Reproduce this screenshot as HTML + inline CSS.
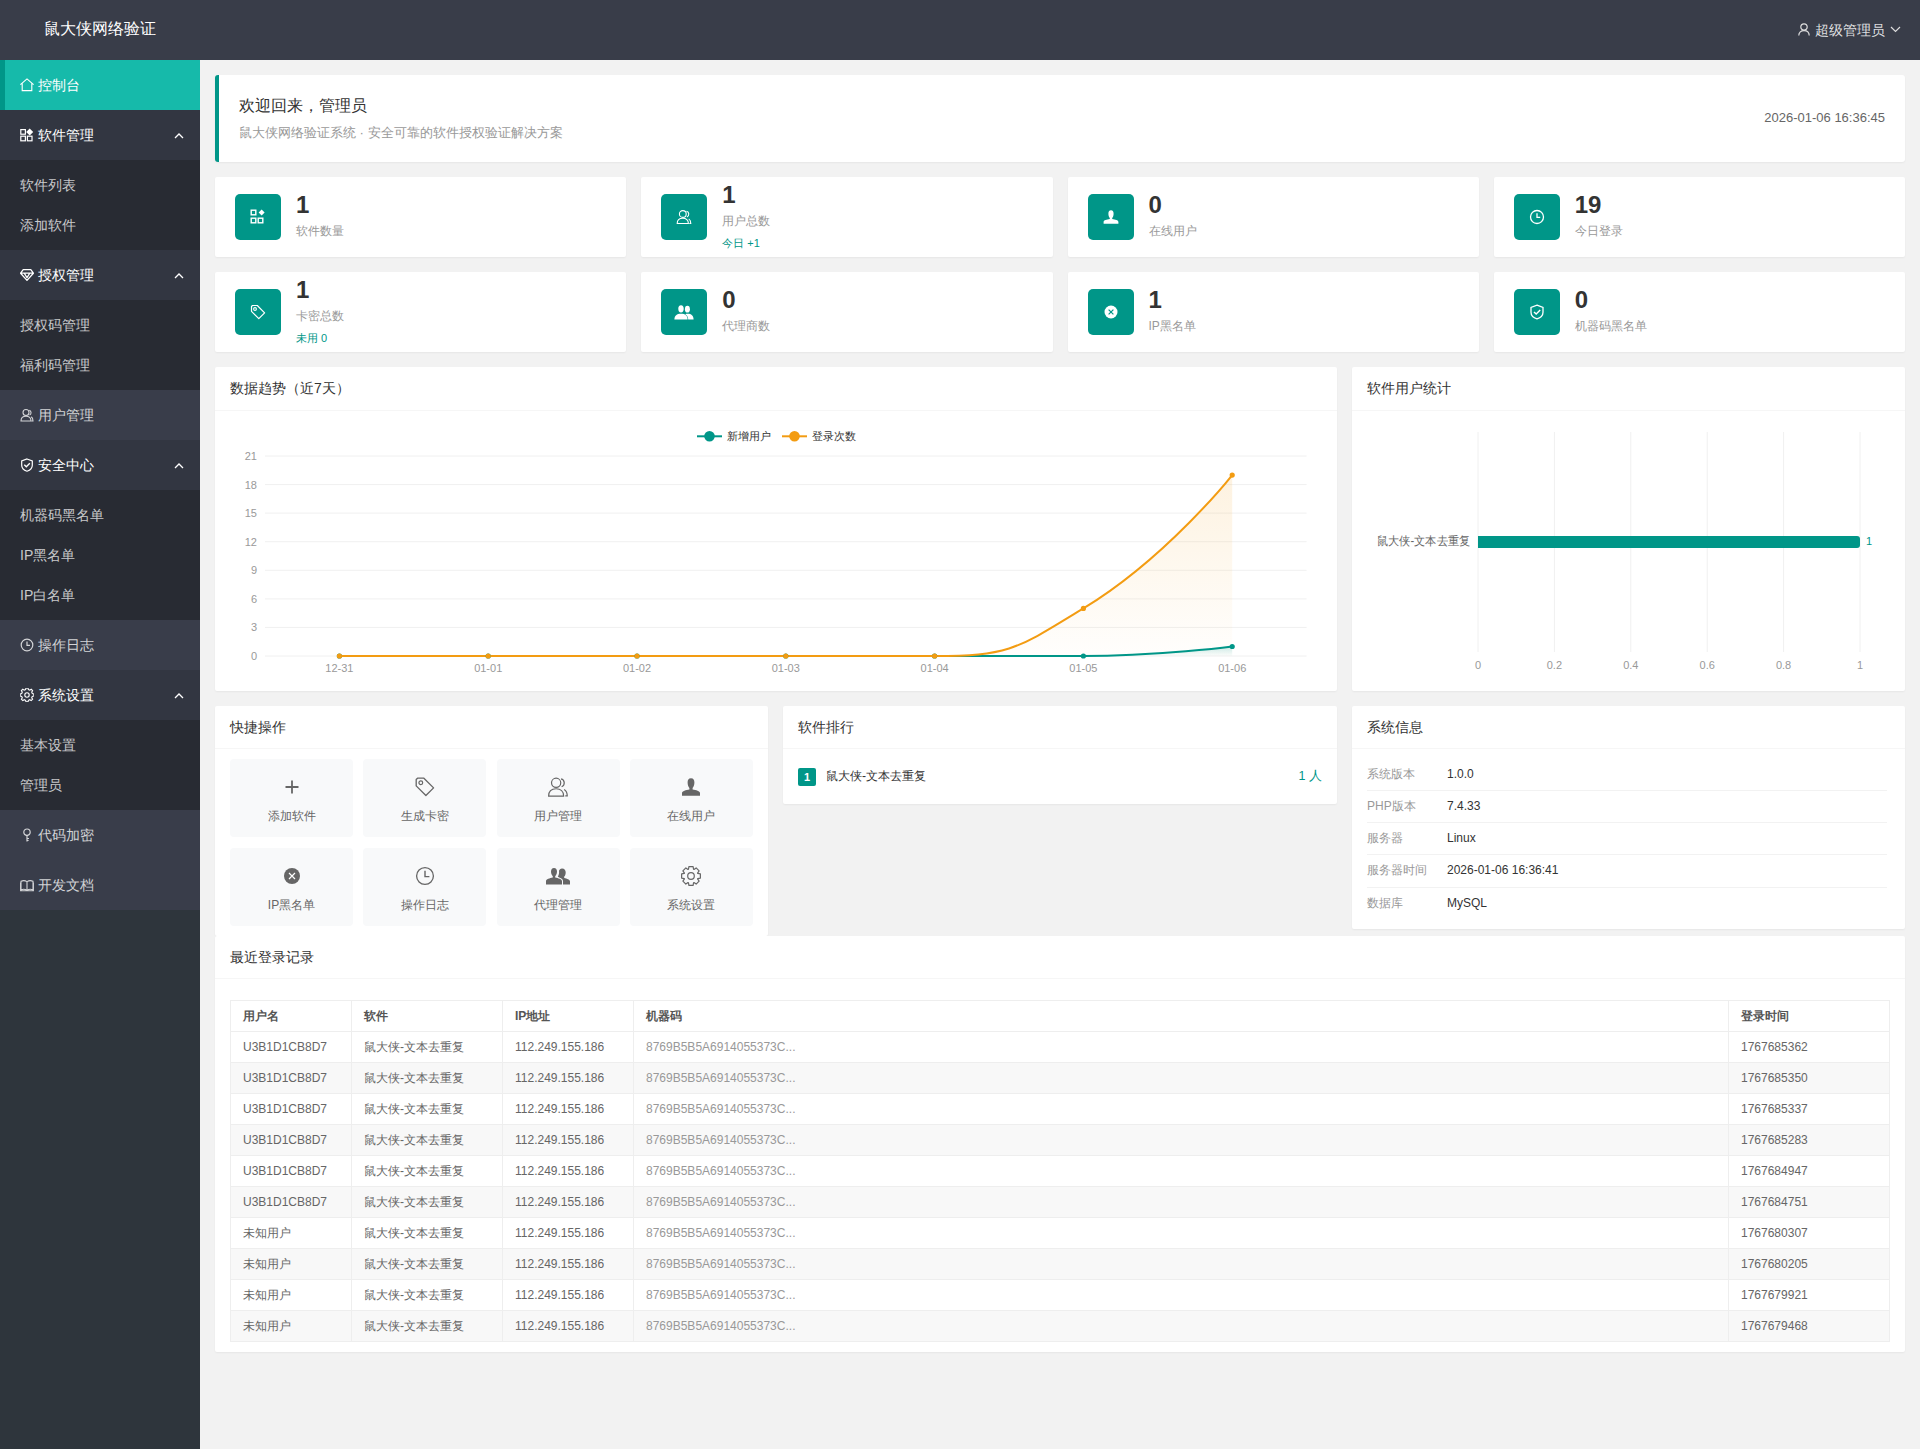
<!DOCTYPE html>
<html><head><meta charset="utf-8">
<style>
*{margin:0;padding:0;box-sizing:border-box}
html,body{width:1920px;height:1449px;overflow:hidden}
body{font-family:"Liberation Sans",sans-serif;background:#f2f2f2;color:#333;position:relative;font-size:14px}
.abs{position:absolute}
#hdr{left:0;top:0;width:1920px;height:60px;background:#393d49}
#logo{left:44px;top:18px;font-size:16px;color:#fff;line-height:22px;font-weight:500}
#uname{right:19px;top:19px;font-size:14px;color:rgba(255,255,255,.85);line-height:22px;display:flex;align-items:center}
#side{left:0;top:60px;width:200px;height:1389px;background:#2e353c}
.it{position:absolute;left:0;width:200px;height:50px;line-height:50px;padding-left:20px;color:rgba(255,255,255,.78);font-size:14px;background:#393d4a;display:flex;align-items:center}
.it.op{background:#323641;color:#fff;font-weight:500}
.it.act{background:#16baaa;color:#fff;border-left:5px solid #009688;padding-left:15px;font-weight:500}
.it svg{width:14px;height:14px;margin-right:4px;flex:none}
.it .car{position:absolute;left:174px;top:22px;width:10px;height:7px}
.ch{position:absolute;left:0;width:200px;background:#282b33}
.ch div{height:40px;line-height:40px;padding-left:20px;color:rgba(255,255,255,.75);font-size:14px}
.card{position:absolute;background:#fff;border-radius:2px;box-shadow:0 1px 2px 0 rgba(0,0,0,.05)}
.ch1{height:43px;line-height:42px;padding:0 15px;border-bottom:1px solid #f6f6f6;font-size:14px;color:#333}
.ib{width:46px;height:46px;background:#009688;border-radius:5px;display:flex;align-items:center;justify-content:center}
.num{font-size:24px;font-weight:bold;line-height:28px;color:#333}
.lab{font-size:12px;line-height:17px;color:#999}
.ext{font-size:11px;line-height:17px;color:#009688}
</style><style>
.tile{position:absolute;width:123px;height:78px;background:#f8f9fa;border-radius:4px}
.ti{position:absolute;left:0;top:17px;width:123px;height:22px;display:flex;align-items:center;justify-content:center}
.tl{position:absolute;left:0;top:49px;width:123px;text-align:center;font-size:12px;line-height:16px;color:#666}
.badge{width:18px;height:18px;background:#009688;border-radius:2px;color:#fff;font-size:11px;font-weight:bold;line-height:18px;text-align:center}
.srow{left:1367px;width:520px;height:32.25px;font-size:12px;line-height:31px}
.sk{position:absolute;left:0;color:#999}
.sv{position:absolute;left:80px;color:#333}
.tb{border-collapse:collapse;table-layout:fixed;width:1659px;font-size:12px;color:#666}
.tb td{height:31px;padding:0 12px;border:1px solid #eee;line-height:30px;white-space:nowrap;overflow:hidden}
.tb .th td{font-weight:bold;color:#555}
.tb tr.ev td{background:#f8f8f8}
.tb td.mc{color:#999}
</style></head><body>
<div id="hdr" class="abs"></div>
<div id="logo" class="abs">鼠大侠网络验证</div>
<div class="abs" style="left:1798px;top:23px;width:12px;height:13px"><svg width="12" height="13" viewBox="0 0 12 13"><circle cx="6" cy="4" r="3.2" fill="none" stroke="#ddd" stroke-width="1.2"/><path d="M0.8 12.6C0.8 9.2 3 7.6 6 7.6S11.2 9.2 11.2 12.6" fill="none" stroke="#ddd" stroke-width="1.2"/></svg></div>
<div class="abs" style="left:1815px;top:19px;font-size:14px;line-height:22px;color:rgba(255,255,255,.85)">超级管理员</div>
<div class="abs" style="left:1890px;top:20px;width:11px;height:7px"><svg width="11" height="7" viewBox="0 0 11 7"><path d="M1 1L5.5 5.5L10 1" fill="none" stroke="#ddd" stroke-width="1.2"/></svg></div>
<div id="side" class="abs"></div>
<div class="it act" style="top:60px"><svg viewBox="0 0 14 14"><path d="M0.4 6.6L7 0.9L13.6 6.6M2.2 5.1V12.6H11.8V5.1" fill="none" stroke="currentColor" stroke-width="1.1"/></svg><span>控制台</span></div>
<div class="it op" style="top:110px"><svg viewBox="0 0 14 14"><g fill="none" stroke="currentColor" stroke-width="1.2"><rect x="0.8" y="1.6" width="4.6" height="4.6"/><rect x="0.8" y="8.2" width="4.6" height="4.6"/><rect x="7.4" y="8.2" width="4.6" height="4.6"/></g><path d="M9.7 0.4L13.2 3.9L9.7 7.4L6.2 3.9Z" fill="currentColor"/></svg><span>软件管理</span><svg class="car" viewBox="0 0 10 7"><path d="M1 6L5 2L9 6" fill="none" stroke="#fff" stroke-width="1.3"/></svg></div>
<div class="it op" style="top:250px"><svg viewBox="0 0 14 14"><path d="M3.2 1.6H10.8L13.4 5.2L7 12.4L0.6 5.2Z M1 5.2H13 M4.2 5.2L7 9.6L9.8 5.2" fill="none" stroke="currentColor" stroke-width="1.3" stroke-linejoin="round"/></svg><span>授权管理</span><svg class="car" viewBox="0 0 10 7"><path d="M1 6L5 2L9 6" fill="none" stroke="#fff" stroke-width="1.3"/></svg></div>
<div class="it " style="top:390px"><svg viewBox="0 0 14 14"><g fill="none" stroke="currentColor" stroke-width="1.1"><circle cx="6" cy="4.5" r="3"/><path d="M1 13C1 9.8 3 8.3 6 8.3S11 9.8 11 13Z"/><path d="M9.3 2.2A2.6 2.6 0 0 1 9.6 7M11.2 8.8C12.3 9.5 13 10.8 13 13H11.5"/></g></svg><span>用户管理</span></div>
<div class="it op" style="top:440px"><svg viewBox="0 0 14 14"><path d="M7 1L12.3 3V7.2C12.3 10 10 12.2 7 13.2C4 12.2 1.7 10 1.7 7.2V3Z" fill="none" stroke="currentColor" stroke-width="1.2"/><path d="M4.3 6.8L6.3 8.8L9.8 5.2" fill="none" stroke="currentColor" stroke-width="1.3"/></svg><span>安全中心</span><svg class="car" viewBox="0 0 10 7"><path d="M1 6L5 2L9 6" fill="none" stroke="#fff" stroke-width="1.3"/></svg></div>
<div class="it " style="top:620px"><svg viewBox="0 0 14 14"><circle cx="7" cy="7" r="5.8" fill="none" stroke="currentColor" stroke-width="1.2"/><path d="M7 3.5V7.3H10" fill="none" stroke="currentColor" stroke-width="1.2"/></svg><span>操作日志</span></div>
<div class="it op" style="top:670px"><svg viewBox="0 0 14 14"><path d="M6 1H8L8.4 2.6L9.8 3.2L11.2 2.3L12.6 3.7L11.7 5.1L12.3 6.5L13.9 7V9L12.3 9.4L11.7 10.8L12.6 12.2L11.2 13.6L9.8 12.7L8.4 13.3L8 14.9H6L5.6 13.3L4.2 12.7L2.8 13.6L1.4 12.2L2.3 10.8L1.7 9.4L0.1 9V7L1.7 6.5L2.3 5.1L1.4 3.7L2.8 2.3L4.2 3.2L5.6 2.6Z" transform="translate(0,-1) scale(1,1)" fill="none" stroke="currentColor" stroke-width="1.1"/><circle cx="7" cy="7" r="2.2" fill="none" stroke="currentColor" stroke-width="1.1"/></svg><span>系统设置</span><svg class="car" viewBox="0 0 10 7"><path d="M1 6L5 2L9 6" fill="none" stroke="#fff" stroke-width="1.3"/></svg></div>
<div class="it " style="top:810px"><svg viewBox="0 0 14 14"><circle cx="7" cy="4.2" r="3.2" fill="none" stroke="currentColor" stroke-width="1.2"/><path d="M7 7.4V13.5M7 10.5H9M7 12.5H8.6" fill="none" stroke="currentColor" stroke-width="1.2"/></svg><span>代码加密</span></div>
<div class="it " style="top:860px"><svg viewBox="0 0 14 14"><path d="M1 3.2C3 2.4 5 2.4 7 3.6C9 2.4 11 2.4 13 3.2V11.8C11 11 9 11 7 12.2C5 11 3 11 1 11.8Z M7 3.6V12.2 M0.6 4.5V12.8H13.4V4.5" fill="none" stroke="currentColor" stroke-width="1.1"/></svg><span>开发文档</span></div>
<div class="ch" style="top:160px;height:90px;padding-top:5px"><div>软件列表</div><div>添加软件</div></div>
<div class="ch" style="top:300px;height:90px;padding-top:5px"><div>授权码管理</div><div>福利码管理</div></div>
<div class="ch" style="top:490px;height:130px;padding-top:5px"><div>机器码黑名单</div><div>IP黑名单</div><div>IP白名单</div></div>
<div class="ch" style="top:720px;height:90px;padding-top:5px"><div>基本设置</div><div>管理员</div></div>

<div class="card" style="left:215px;top:75px;width:1690px;height:87px;border-left:4px solid #009688;border-radius:3px"></div>
<div class="abs" style="left:239px;top:95px;font-size:16px;line-height:22px;color:#333">欢迎回来，管理员</div>
<div class="abs" style="left:239px;top:124px;font-size:13px;line-height:18px;color:#999">鼠大侠网络验证系统 · 安全可靠的软件授权验证解决方案</div>
<div class="abs" style="right:35px;top:109px;font-size:13px;line-height:18px;color:#666">2026-01-06 16:36:45</div>

<div class="card" style="left:215px;top:177px;width:411.25px;height:80px"></div>
<div class="abs ib" style="left:235px;top:194px"><svg viewBox="0 0 16 16" width="16" height="16"><g fill="none" stroke="#fff" stroke-width="1.4"><rect x="1.2" y="1.2" width="4.6" height="4.6"/><rect x="1.2" y="9.2" width="4.6" height="4.6"/><rect x="8.2" y="9.2" width="4.6" height="4.6"/></g><path d="M11.6 0.6L14.6 3.6L11.6 6.6L8.6 3.6Z" fill="#fff"/></svg></div>
<div class="abs num" style="left:296px;top:191px">1</div>
<div class="abs lab" style="left:296px;top:223px">软件数量</div>
<div class="card" style="left:641.25px;top:177px;width:411.25px;height:80px"></div>
<div class="abs ib" style="left:661.25px;top:194px"><svg viewBox="0 0 16 16" width="16" height="16"><g fill="none" stroke="#fff" stroke-width="1.1"><circle cx="6.8" cy="5" r="3.4"/><path d="M1.2 14.5C1.2 11 3.5 9.3 6.8 9.3S12.4 11 12.4 14.5Z"/><path d="M10.5 2.2A3 3 0 0 1 10.9 7.9M12.7 9.9C14 10.7 14.8 12.2 14.8 14.5H13.3"/></g></svg></div>
<div class="abs num" style="left:722.25px;top:181px">1</div>
<div class="abs lab" style="left:722.25px;top:213px">用户总数</div>
<div class="abs ext" style="left:722.25px;top:235px">今日 +1</div>
<div class="card" style="left:1067.5px;top:177px;width:411.25px;height:80px"></div>
<div class="abs ib" style="left:1087.5px;top:194px"><svg viewBox="0 0 16 16" width="16" height="16"><path d="M8 1.3C6.1 1.3 5.4 2.8 5.4 4.7C5.4 6.5 6 8.1 6.8 8.9V10.1C3.8 10.6 0.6 11.3 0.6 12.9V14.7H15.4V12.9C15.4 11.3 12.2 10.6 9.2 10.1V8.9C10 8.1 10.6 6.5 10.6 4.7C10.6 2.8 9.9 1.3 8 1.3Z" fill="#fff"/></svg></div>
<div class="abs num" style="left:1148.5px;top:191px">0</div>
<div class="abs lab" style="left:1148.5px;top:223px">在线用户</div>
<div class="card" style="left:1493.75px;top:177px;width:411.25px;height:80px"></div>
<div class="abs ib" style="left:1513.75px;top:194px"><svg viewBox="0 0 16 16" width="16" height="16"><circle cx="8" cy="8" r="6.5" fill="none" stroke="#fff" stroke-width="1.3"/><path d="M8 4.2V8.4H11.2" fill="none" stroke="#fff" stroke-width="1.3"/></svg></div>
<div class="abs num" style="left:1574.75px;top:191px">19</div>
<div class="abs lab" style="left:1574.75px;top:223px">今日登录</div>
<div class="card" style="left:215px;top:272px;width:411.25px;height:80px"></div>
<div class="abs ib" style="left:235px;top:289px"><svg viewBox="0 0 16 16" width="16" height="16"><path d="M1.5 2.5V7.3L8.8 14.6L14.6 8.8L7.3 1.5H2.5Z" fill="none" stroke="#fff" stroke-width="1.2" stroke-linejoin="round"/><circle cx="5" cy="5" r="1.4" fill="none" stroke="#fff" stroke-width="1.1"/></svg></div>
<div class="abs num" style="left:296px;top:276px">1</div>
<div class="abs lab" style="left:296px;top:308px">卡密总数</div>
<div class="abs ext" style="left:296px;top:330px">未用 0</div>
<div class="card" style="left:641.25px;top:272px;width:411.25px;height:80px"></div>
<div class="abs ib" style="left:661.25px;top:289px"><svg viewBox="0 0 20 15" width="20" height="15"><ellipse cx="13.4" cy="4.2" rx="2.5" ry="3.4" fill="#fff"/><path d="M11.2 9.3C12 8.9 12.8 8.8 13.6 8.8C17.3 8.8 19.6 10.6 19.6 14.6H14.2C14.2 12.2 13.1 10.4 11.2 9.3Z" fill="#fff"/><ellipse cx="7" cy="3.8" rx="2.7" ry="3.6" fill="#fff"/><path d="M0.4 14.6C0.4 10.7 2.8 8.7 7 8.7S13.6 10.7 13.6 14.6Z" fill="#fff"/></svg></div>
<div class="abs num" style="left:722.25px;top:286px">0</div>
<div class="abs lab" style="left:722.25px;top:318px">代理商数</div>
<div class="card" style="left:1067.5px;top:272px;width:411.25px;height:80px"></div>
<div class="abs ib" style="left:1087.5px;top:289px"><svg viewBox="0 0 16 16" width="16" height="16"><circle cx="8" cy="8" r="6.5" fill="#fff"/><path d="M5.6 5.6L10.4 10.4M10.4 5.6L5.6 10.4" stroke="#009688" stroke-width="1.2"/></svg></div>
<div class="abs num" style="left:1148.5px;top:286px">1</div>
<div class="abs lab" style="left:1148.5px;top:318px">IP黑名单</div>
<div class="card" style="left:1493.75px;top:272px;width:411.25px;height:80px"></div>
<div class="abs ib" style="left:1513.75px;top:289px"><svg viewBox="0 0 16 16" width="16" height="16"><path d="M8 1.2L14 3.4V8.2C14 11.3 11.4 13.8 8 14.9C4.6 13.8 2 11.3 2 8.2V3.4Z" fill="none" stroke="#fff" stroke-width="1.3"/><path d="M5 7.9L7.2 10.1L11.2 6" fill="none" stroke="#fff" stroke-width="1.4"/></svg></div>
<div class="abs num" style="left:1574.75px;top:286px">0</div>
<div class="abs lab" style="left:1574.75px;top:318px">机器码黑名单</div>

<div class="card" style="left:215px;top:367px;width:1121.67px;height:324px"><div class="ch1" style="height:44px;line-height:43px">数据趋势（近7天）</div></div>
<div class="card" style="left:1351.67px;top:367px;width:553.33px;height:324px"><div class="ch1" style="height:44px;line-height:43px">软件用户统计</div></div>
<svg class="abs" style="left:0;top:0" width="1920" height="1449" viewBox="0 0 1920 1449" font-family="Liberation Sans, sans-serif">
<defs><linearGradient id="go" x1="0" y1="0" x2="0" y2="1"><stop offset="0" stop-color="#f39c12" stop-opacity="0.13"/><stop offset="1" stop-color="#f39c12" stop-opacity="0.01"/></linearGradient><linearGradient id="gt" x1="0" y1="0" x2="0" y2="1"><stop offset="0" stop-color="#009688" stop-opacity="0.2"/><stop offset="1" stop-color="#009688" stop-opacity="0.01"/></linearGradient></defs>
<line x1="265" y1="656.0" x2="1306.6" y2="656.0" stroke="#f0f0f0" stroke-width="1"/>
<text x="257" y="660.0" text-anchor="end" font-size="11" fill="#999">0</text>
<line x1="265" y1="627.4" x2="1306.6" y2="627.4" stroke="#f0f0f0" stroke-width="1"/>
<text x="257" y="631.4" text-anchor="end" font-size="11" fill="#999">3</text>
<line x1="265" y1="598.9" x2="1306.6" y2="598.9" stroke="#f0f0f0" stroke-width="1"/>
<text x="257" y="602.9" text-anchor="end" font-size="11" fill="#999">6</text>
<line x1="265" y1="570.3" x2="1306.6" y2="570.3" stroke="#f0f0f0" stroke-width="1"/>
<text x="257" y="574.3" text-anchor="end" font-size="11" fill="#999">9</text>
<line x1="265" y1="541.7" x2="1306.6" y2="541.7" stroke="#f0f0f0" stroke-width="1"/>
<text x="257" y="545.7" text-anchor="end" font-size="11" fill="#999">12</text>
<line x1="265" y1="513.1" x2="1306.6" y2="513.1" stroke="#f0f0f0" stroke-width="1"/>
<text x="257" y="517.1" text-anchor="end" font-size="11" fill="#999">15</text>
<line x1="265" y1="484.6" x2="1306.6" y2="484.6" stroke="#f0f0f0" stroke-width="1"/>
<text x="257" y="488.6" text-anchor="end" font-size="11" fill="#999">18</text>
<line x1="265" y1="456.0" x2="1306.6" y2="456.0" stroke="#f0f0f0" stroke-width="1"/>
<text x="257" y="460.0" text-anchor="end" font-size="11" fill="#999">21</text>
<text x="339.4" y="672" text-anchor="middle" font-size="11" fill="#999">12-31</text>
<text x="488.2" y="672" text-anchor="middle" font-size="11" fill="#999">01-01</text>
<text x="637.0" y="672" text-anchor="middle" font-size="11" fill="#999">01-02</text>
<text x="785.8" y="672" text-anchor="middle" font-size="11" fill="#999">01-03</text>
<text x="934.6" y="672" text-anchor="middle" font-size="11" fill="#999">01-04</text>
<text x="1083.4" y="672" text-anchor="middle" font-size="11" fill="#999">01-05</text>
<text x="1232.2" y="672" text-anchor="middle" font-size="11" fill="#999">01-06</text>
<path d="M339.40 656.00 C339.40 656.00 413.80 656.00 488.20 656.00 C562.60 656.00 562.60 656.00 637.00 656.00 C711.40 656.00 711.40 656.00 785.80 656.00 C860.20 656.00 862.01 656.00 934.60 656.00 C1010.81 656.00 1018.10 648.08 1083.40 608.38 C1166.90 557.61 1232.20 475.05 1232.20 475.05 L1232.20 656 L339.40 656Z" fill="url(#go)"/>
<path d="M339.40 656.00 C339.40 656.00 413.80 656.00 488.20 656.00 C562.60 656.00 562.60 656.00 637.00 656.00 C711.40 656.00 711.40 656.00 785.80 656.00 C860.20 656.00 860.20 656.00 934.60 656.00 C1009.00 656.00 1009.08 656.00 1083.40 656.00 C1157.88 656.00 1232.20 646.48 1232.20 646.48 L1232.20 656 L339.40 656Z" fill="url(#gt)"/>
<path d="M339.40 656.00 C339.40 656.00 413.80 656.00 488.20 656.00 C562.60 656.00 562.60 656.00 637.00 656.00 C711.40 656.00 711.40 656.00 785.80 656.00 C860.20 656.00 860.20 656.00 934.60 656.00 C1009.00 656.00 1009.08 656.00 1083.40 656.00 C1157.88 656.00 1232.20 646.48 1232.20 646.48" fill="none" stroke="#009688" stroke-width="2"/>
<path d="M339.40 656.00 C339.40 656.00 413.80 656.00 488.20 656.00 C562.60 656.00 562.60 656.00 637.00 656.00 C711.40 656.00 711.40 656.00 785.80 656.00 C860.20 656.00 862.01 656.00 934.60 656.00 C1010.81 656.00 1018.10 648.08 1083.40 608.38 C1166.90 557.61 1232.20 475.05 1232.20 475.05" fill="none" stroke="#f39c12" stroke-width="2"/>
<circle cx="339.40" cy="656.00" r="2.6" fill="#009688"/>
<circle cx="488.20" cy="656.00" r="2.6" fill="#009688"/>
<circle cx="637.00" cy="656.00" r="2.6" fill="#009688"/>
<circle cx="785.80" cy="656.00" r="2.6" fill="#009688"/>
<circle cx="934.60" cy="656.00" r="2.6" fill="#009688"/>
<circle cx="1083.40" cy="656.00" r="2.6" fill="#009688"/>
<circle cx="1232.20" cy="646.48" r="2.6" fill="#009688"/>
<circle cx="339.40" cy="656.00" r="2.6" fill="#f39c12"/>
<circle cx="488.20" cy="656.00" r="2.6" fill="#f39c12"/>
<circle cx="637.00" cy="656.00" r="2.6" fill="#f39c12"/>
<circle cx="785.80" cy="656.00" r="2.6" fill="#f39c12"/>
<circle cx="934.60" cy="656.00" r="2.6" fill="#f39c12"/>
<circle cx="1083.40" cy="608.38" r="2.6" fill="#f39c12"/>
<circle cx="1232.20" cy="475.05" r="2.6" fill="#f39c12"/>
<line x1="697" y1="436.3" x2="722" y2="436.3" stroke="#009688" stroke-width="2"/><circle cx="709.5" cy="436.3" r="5.3" fill="#009688"/>
<text x="727" y="440.3" font-size="11" fill="#333" textLength="44" lengthAdjust="spacingAndGlyphs">新增用户</text>
<line x1="782" y1="436.3" x2="807" y2="436.3" stroke="#f39c12" stroke-width="2"/><circle cx="794.5" cy="436.3" r="5.3" fill="#f39c12"/>
<text x="812" y="440.3" font-size="11" fill="#333" textLength="44" lengthAdjust="spacingAndGlyphs">登录次数</text>
<line x1="1478.0" y1="432" x2="1478.0" y2="652" stroke="#f0f0f0" stroke-width="1"/>
<text x="1478.0" y="669" text-anchor="middle" font-size="11" fill="#999">0</text>
<line x1="1554.4" y1="432" x2="1554.4" y2="652" stroke="#f0f0f0" stroke-width="1"/>
<text x="1554.4" y="669" text-anchor="middle" font-size="11" fill="#999">0.2</text>
<line x1="1630.8" y1="432" x2="1630.8" y2="652" stroke="#f0f0f0" stroke-width="1"/>
<text x="1630.8" y="669" text-anchor="middle" font-size="11" fill="#999">0.4</text>
<line x1="1707.2" y1="432" x2="1707.2" y2="652" stroke="#f0f0f0" stroke-width="1"/>
<text x="1707.2" y="669" text-anchor="middle" font-size="11" fill="#999">0.6</text>
<line x1="1783.6" y1="432" x2="1783.6" y2="652" stroke="#f0f0f0" stroke-width="1"/>
<text x="1783.6" y="669" text-anchor="middle" font-size="11" fill="#999">0.8</text>
<line x1="1860.0" y1="432" x2="1860.0" y2="652" stroke="#f0f0f0" stroke-width="1"/>
<text x="1860.0" y="669" text-anchor="middle" font-size="11" fill="#999">1</text>
<path d="M1478 536 H1857 Q1860 536 1860 539 V545 Q1860 548 1857 548 H1478Z" fill="#009688"/>
<text x="1470" y="545" text-anchor="end" font-size="12" fill="#666" textLength="93" lengthAdjust="spacingAndGlyphs">鼠大侠-文本去重复</text>
<text x="1866" y="545" font-size="11" fill="#009688">1</text>
</svg><div class="card" style="left:215px;top:706px;width:553.33px;height:230px"><div class="ch1">快捷操作</div></div>
<div class="tile" style="left:230.00px;top:759.0px"><div class="ti"><svg width="16" height="16" viewBox="0 0 16 16"><path d="M8 1.5V14.5M1.5 8H14.5" stroke="#666" stroke-width="1.8"/></svg></div><div class="tl">添加软件</div></div>
<div class="tile" style="left:363.33px;top:759.0px"><div class="ti"><svg width="22" height="22" viewBox="0 0 20 20"><path d="M2 3.2V9L10.8 17.8L17.8 10.8L9 2H3.2Z" fill="none" stroke="#666" stroke-width="1.2" stroke-linejoin="round"/><circle cx="6.2" cy="6.2" r="1.7" fill="none" stroke="#666" stroke-width="1.1"/></svg></div><div class="tl">生成卡密</div></div>
<div class="tile" style="left:496.66px;top:759.0px"><div class="ti"><svg width="22" height="22" viewBox="0 0 20 20"><g fill="none" stroke="#666" stroke-width="1.1"><circle cx="8.3" cy="6.2" r="4.2"/><path d="M1.5 18.2C1.5 14 4.2 11.6 8.3 11.6S15.1 14 15.1 18.2Z"/><path d="M12.8 2.6A3.8 3.8 0 0 1 13.3 9.8M15.6 12.2C17.2 13.2 18.4 15 18.4 18H16.6"/></g></svg></div><div class="tl">用户管理</div></div>
<div class="tile" style="left:629.99px;top:759.0px"><div class="ti"><svg width="20" height="20" viewBox="0 0 20 20"><path d="M10 1.2C7.5 1.2 6.6 3.1 6.6 5.5C6.6 7.8 7.4 10 8.4 10.9V12.4C5 13 1 13.9 1 15.9V18.8H19V15.9C19 13.9 15 13 11.6 12.4V10.9C12.6 10 13.4 7.8 13.4 5.5C13.4 3.1 12.5 1.2 10 1.2Z" fill="#666"/></svg></div><div class="tl">在线用户</div></div>
<div class="tile" style="left:230.00px;top:847.5px"><div class="ti"><svg width="18" height="18" viewBox="0 0 18 18"><circle cx="9" cy="9" r="8" fill="#666"/><path d="M6 6L12 12M12 6L6 12" stroke="#fff" stroke-width="1.2"/></svg></div><div class="tl">IP黑名单</div></div>
<div class="tile" style="left:363.33px;top:847.5px"><div class="ti"><svg width="20" height="20" viewBox="0 0 20 20"><circle cx="10" cy="10" r="8.4" fill="none" stroke="#666" stroke-width="1.3"/><path d="M10 4.8V10.6H14.4" fill="none" stroke="#666" stroke-width="1.4"/></svg></div><div class="tl">操作日志</div></div>
<div class="tile" style="left:496.66px;top:847.5px"><div class="ti"><svg width="26" height="20" viewBox="0 0 26 20"><path d="M9 2C7 2 6 3.6 6 5.6C6 7.6 6.8 9.4 7.8 10.2V11.4C4.8 12.1 1 13.1 1 15V18.5H17V15C17 13.1 13.2 12.1 10.2 11.4V10.2C11.2 9.4 12 7.6 12 5.6C12 3.6 11 2 9 2Z" fill="#666"/><path d="M17 2.4C15.4 2.4 14.4 3.4 14 4.8C14.3 6.6 14 8.8 12.8 10.6C13.1 11.1 13.6 11.4 14.2 11.6C16.8 12.5 18 13.8 18 15.2V18.5H25V15.4C25 13.7 22 12.7 19.2 12V10.6C20 9.9 20.7 8.3 20.7 6.5C20.7 4.2 19.6 2.4 17 2.4Z" fill="#666"/></svg></div><div class="tl">代理管理</div></div>
<div class="tile" style="left:629.99px;top:847.5px"><div class="ti"><svg width="22" height="22" viewBox="0 0 22 22"><path transform="translate(11 11)" d="M9.37 -2.10 L9.37 2.10 L6.74 2.54 L6.56 2.97 L8.11 5.14 L5.14 8.11 L2.97 6.56 L2.54 6.74 L2.10 9.37 L-2.10 9.37 L-2.54 6.74 L-2.97 6.56 L-5.14 8.11 L-8.11 5.14 L-6.56 2.97 L-6.74 2.54 L-9.37 2.10 L-9.37 -2.10 L-6.74 -2.54 L-6.56 -2.97 L-8.11 -5.14 L-5.14 -8.11 L-2.97 -6.56 L-2.54 -6.74 L-2.10 -9.37 L2.10 -9.37 L2.54 -6.74 L2.97 -6.56 L5.14 -8.11 L8.11 -5.14 L6.56 -2.97 L6.74 -2.54Z" fill="none" stroke="#666" stroke-width="1.2" stroke-linejoin="round"/><circle cx="11" cy="11" r="3.3" fill="none" stroke="#666" stroke-width="1.2"/></svg></div><div class="tl">系统设置</div></div><div class="card" style="left:783.33px;top:706px;width:553.34px;height:98px"><div class="ch1">软件排行</div></div>
<div class="abs badge" style="left:798px;top:768px">1</div>
<div class="abs" style="left:826px;top:767px;font-size:12.2px;line-height:18px;color:#333">鼠大侠-文本去重复</div>
<div class="abs" style="right:598px;top:767px;font-size:12.5px;line-height:18px;color:#009688">1 人</div>
<div class="card" style="left:1351.67px;top:706px;width:553.33px;height:223px"><div class="ch1">系统信息</div></div>
<div class="abs srow" style="top:758.50px;border-bottom:1px solid #f2f2f2;"><span class="sk">系统版本</span><span class="sv">1.0.0</span></div>
<div class="abs srow" style="top:790.80px;border-bottom:1px solid #f2f2f2;"><span class="sk">PHP版本</span><span class="sv">7.4.33</span></div>
<div class="abs srow" style="top:823.10px;border-bottom:1px solid #f2f2f2;"><span class="sk">服务器</span><span class="sv">Linux</span></div>
<div class="abs srow" style="top:855.40px;border-bottom:1px solid #f2f2f2;"><span class="sk">服务器时间</span><span class="sv">2026-01-06 16:36:41</span></div>
<div class="abs srow" style="top:887.70px;"><span class="sk">数据库</span><span class="sv">MySQL</span></div><div class="card" style="left:215px;top:936px;width:1690px;height:416px"><div class="ch1">最近登录记录</div></div>
<table class="abs tb" style="left:230px;top:1000px"><colgroup><col style="width:121px"><col style="width:151px"><col style="width:131px"><col style="width:1095px"><col style="width:161px"></colgroup>
<tr class="th"><td>用户名</td><td>软件</td><td>IP地址</td><td>机器码</td><td>登录时间</td></tr>
<tr><td>U3B1D1CB8D7</td><td>鼠大侠-文本去重复</td><td>112.249.155.186</td><td class="mc">8769B5B5A6914055373C...</td><td>1767685362</td></tr>
<tr class="ev"><td>U3B1D1CB8D7</td><td>鼠大侠-文本去重复</td><td>112.249.155.186</td><td class="mc">8769B5B5A6914055373C...</td><td>1767685350</td></tr>
<tr><td>U3B1D1CB8D7</td><td>鼠大侠-文本去重复</td><td>112.249.155.186</td><td class="mc">8769B5B5A6914055373C...</td><td>1767685337</td></tr>
<tr class="ev"><td>U3B1D1CB8D7</td><td>鼠大侠-文本去重复</td><td>112.249.155.186</td><td class="mc">8769B5B5A6914055373C...</td><td>1767685283</td></tr>
<tr><td>U3B1D1CB8D7</td><td>鼠大侠-文本去重复</td><td>112.249.155.186</td><td class="mc">8769B5B5A6914055373C...</td><td>1767684947</td></tr>
<tr class="ev"><td>U3B1D1CB8D7</td><td>鼠大侠-文本去重复</td><td>112.249.155.186</td><td class="mc">8769B5B5A6914055373C...</td><td>1767684751</td></tr>
<tr><td>未知用户</td><td>鼠大侠-文本去重复</td><td>112.249.155.186</td><td class="mc">8769B5B5A6914055373C...</td><td>1767680307</td></tr>
<tr class="ev"><td>未知用户</td><td>鼠大侠-文本去重复</td><td>112.249.155.186</td><td class="mc">8769B5B5A6914055373C...</td><td>1767680205</td></tr>
<tr><td>未知用户</td><td>鼠大侠-文本去重复</td><td>112.249.155.186</td><td class="mc">8769B5B5A6914055373C...</td><td>1767679921</td></tr>
<tr class="ev"><td>未知用户</td><td>鼠大侠-文本去重复</td><td>112.249.155.186</td><td class="mc">8769B5B5A6914055373C...</td><td>1767679468</td></tr>
</table>
</body></html>
